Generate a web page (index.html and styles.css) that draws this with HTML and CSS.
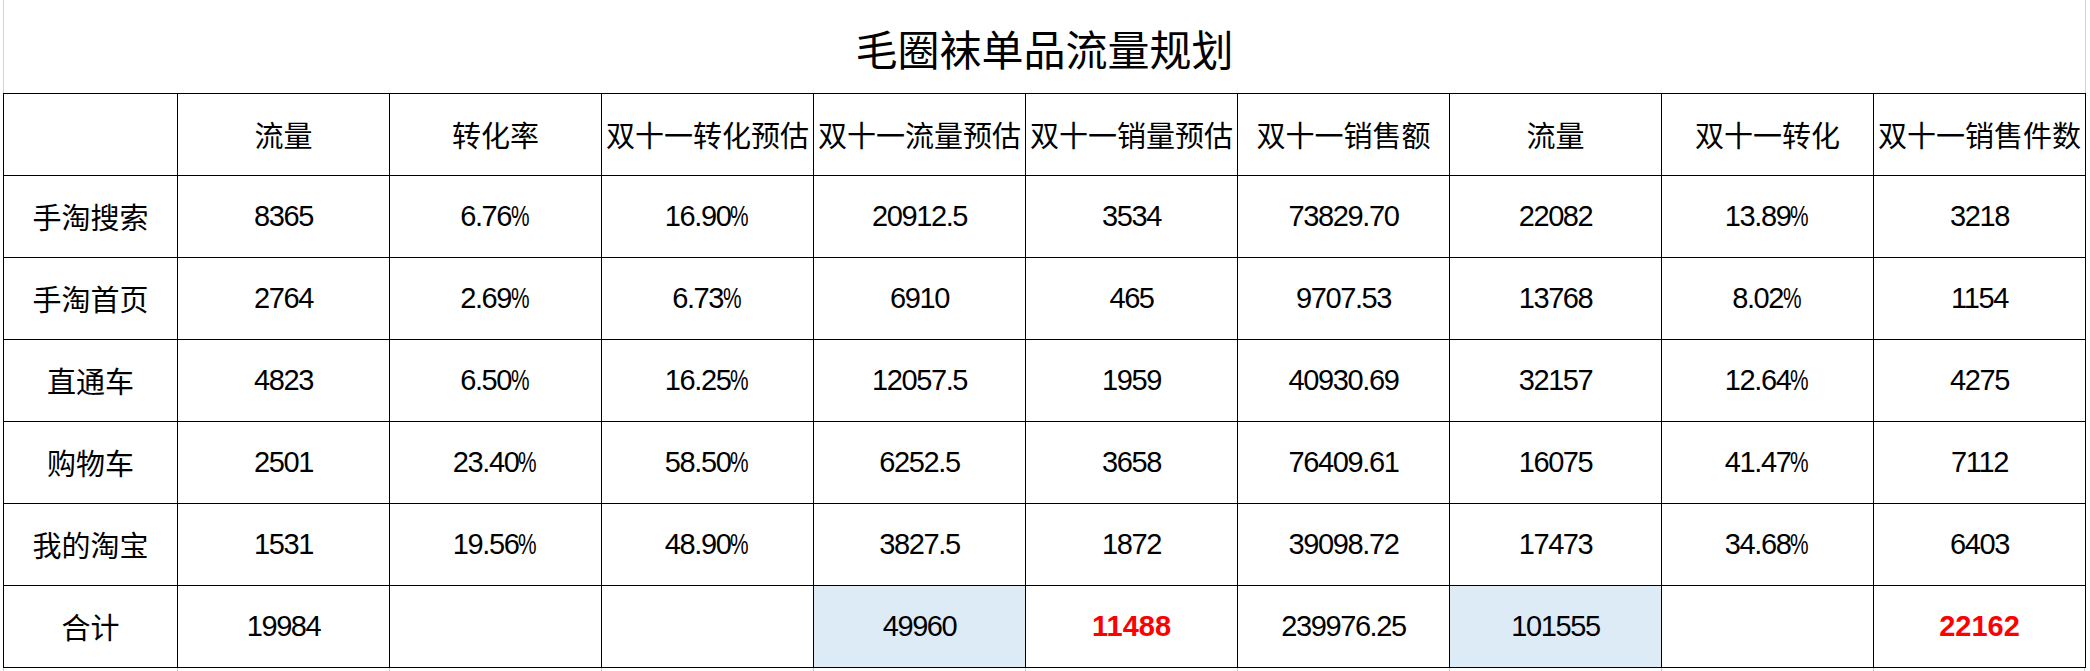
FILE: index.html
```html
<!DOCTYPE html>
<html lang="zh-CN">
<head>
<meta charset="utf-8">
<title>毛圈袜单品流量规划</title>
<link rel="stylesheet" href="styles.css">
</head>
<body>
<div class="sheet">
  <div class="title-cell">毛圈袜单品流量规划</div>
  <table class="grid">
    <colgroup>
      <col class="c-first">
      <col class="c"><col class="c"><col class="c"><col class="c"><col class="c"><col class="c"><col class="c"><col class="c"><col class="c">
    </colgroup>
    <tr>
      <td></td><td>流量</td><td>转化率</td><td>双十一转化预估</td><td>双十一流量预估</td><td>双十一销量预估</td><td>双十一销售额</td><td>流量</td><td>双十一转化</td><td>双十一销售件数</td>
    </tr>
    <tr>
      <td>手淘搜索</td><td class="n">8365</td><td class="n">6.76<span class="pct">%</span></td><td class="n">16.90<span class="pct">%</span></td><td class="n">20912.5</td><td class="n">3534</td><td class="n">73829.70</td><td class="n">22082</td><td class="n">13.89<span class="pct">%</span></td><td class="n">3218</td>
    </tr>
    <tr>
      <td>手淘首页</td><td class="n">2764</td><td class="n">2.69<span class="pct">%</span></td><td class="n">6.73<span class="pct">%</span></td><td class="n">6910</td><td class="n">465</td><td class="n">9707.53</td><td class="n">13768</td><td class="n">8.02<span class="pct">%</span></td><td class="n">1154</td>
    </tr>
    <tr>
      <td>直通车</td><td class="n">4823</td><td class="n">6.50<span class="pct">%</span></td><td class="n">16.25<span class="pct">%</span></td><td class="n">12057.5</td><td class="n">1959</td><td class="n">40930.69</td><td class="n">32157</td><td class="n">12.64<span class="pct">%</span></td><td class="n">4275</td>
    </tr>
    <tr>
      <td>购物车</td><td class="n">2501</td><td class="n">23.40<span class="pct">%</span></td><td class="n">58.50<span class="pct">%</span></td><td class="n">6252.5</td><td class="n">3658</td><td class="n">76409.61</td><td class="n">16075</td><td class="n">41.47<span class="pct">%</span></td><td class="n">7112</td>
    </tr>
    <tr>
      <td>我的淘宝</td><td class="n">1531</td><td class="n">19.56<span class="pct">%</span></td><td class="n">48.90<span class="pct">%</span></td><td class="n">3827.5</td><td class="n">1872</td><td class="n">39098.72</td><td class="n">17473</td><td class="n">34.68<span class="pct">%</span></td><td class="n">6403</td>
    </tr>
    <tr>
      <td>合计</td><td class="n">19984</td><td></td><td></td><td class="n fill">49960</td><td class="n hot">11488</td><td class="n">239976.25</td><td class="n fill">101555</td><td></td><td class="n hot">22162</td>
    </tr>
  </table>
  <div class="below">
    <span></span><span></span><span></span><span></span><span></span><span></span><span></span><span></span><span></span><span></span>
  </div>
</div>
</body>
</html>
```

FILE: styles.css
```css
html, body {
  margin: 0;
  padding: 0;
  background: #ffffff;
}

.sheet {
  width: 2090px;
  height: 671px;
  overflow: hidden;
  color: #000000;
  font-family: "Liberation Sans", "Noto Sans CJK SC", sans-serif;
}

.title-cell {
  box-sizing: border-box;
  margin-left: 3px;
  width: 2083px;
  height: 93px;
  border-left: 1px solid #d4d4d4;
  border-right: 1px solid #d4d4d4;
  display: flex;
  align-items: center;
  justify-content: center;
  padding-top: 2px;
  font-family: "Noto Sans CJK SC", sans-serif;
  font-size: 42px;
  line-height: 1;
}

.grid {
  margin-left: 3px;
  border-collapse: collapse;
  table-layout: fixed;
  width: 2083px;
}

.c-first { width: 174px; }
.c { width: 212px; }

.grid td {
  border: 1px solid #000000;
  height: 81px;
  padding: 0;
  text-align: center;
  vertical-align: middle;
  white-space: nowrap;
  font-family: "Noto Sans CJK SC", sans-serif;
  font-size: 29px;
  line-height: 1;
}

.grid td.n {
  font-family: "Liberation Sans", "Noto Sans CJK SC", sans-serif;
  font-size: 29px;
  letter-spacing: -1.4px;
}

.pct {
  display: inline-block;
  letter-spacing: 0;
  transform: scaleX(0.72);
  transform-origin: left center;
  margin-right: -6px;
}

.grid td.fill {
  background: #ddebf7;
}

.grid td.hot {
  color: #ff0000;
  font-weight: bold;
  letter-spacing: 0;
}

.below {
  margin-left: 3px;
  display: grid;
  grid-template-columns: 174px repeat(9, 212px);
  height: 10px;
}

.below span {
  border-left: 1px solid #d4d4d4;
}

.below span:last-child {
  border-right: 1px solid #d4d4d4;
}
```
